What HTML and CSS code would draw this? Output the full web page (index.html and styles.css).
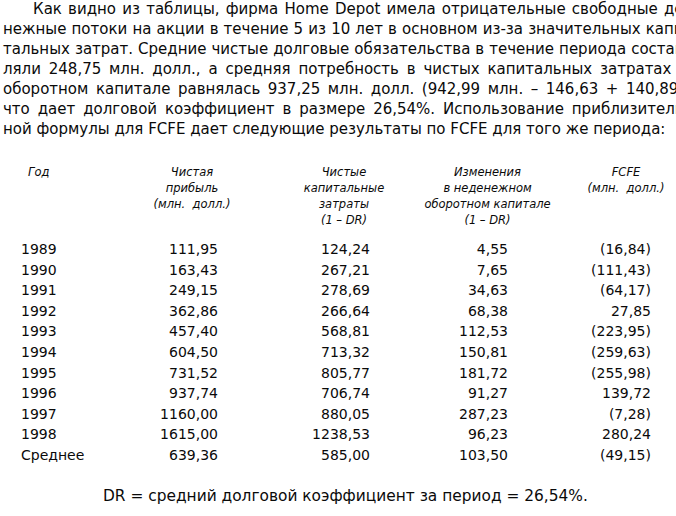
FILE: index.html
```html
<!DOCTYPE html>
<html lang="ru">
<head>
<meta charset="utf-8">
<title>FCFE Home Depot</title>
<link rel="stylesheet" href="styles.css">
</head>
<body>
<div class="page">
  <div class="para">
    <div class="line first">Как видно из таблицы, фирма Home Depot имела отрицательные свободные де-</div>
    <div class="line">нежные потоки на акции в течение 5 из 10 лет в основном из-за значительных капи-</div>
    <div class="line">тальных затрат. Средние чистые долговые обязательства в течение периода состав-</div>
    <div class="line">ляли 248,75 млн. долл., а средняя потребность в чистых капитальных затратах и</div>
    <div class="line">оборотном капитале равнялась 937,25 млн. долл. (942,99 млн. – 146,63 + 140,89),</div>
    <div class="line">что дает долговой коэффициент в размере 26,54%. Использование приблизитель-</div>
    <div class="line last">ной формулы для FCFE дает следующие результаты по FCFE для того же периода:</div>
  </div>

  <table class="data">
    <colgroup>
      <col class="c0"><col class="c1"><col class="c2"><col class="c3"><col class="c4">
    </colgroup>
    <thead>
      <tr>
        <th class="h-year">Год</th>
        <th>Чистая<br>прибыль<br>(млн.&nbsp; долл.)</th>
        <th>Чистые<br>капитальные<br>затраты<br>(1 – DR)</th>
        <th>Изменения<br>в неденежном<br>оборотном капитале<br>(1 – DR)</th>
        <th>FCFE<br>(млн.&nbsp; долл.)</th>
      </tr>
    </thead>
    <tbody>
      <tr><td>1989</td><td>111,95</td><td>124,24</td><td>4,55</td><td>(16,84)</td></tr>
      <tr><td>1990</td><td>163,43</td><td>267,21</td><td>7,65</td><td>(111,43)</td></tr>
      <tr><td>1991</td><td>249,15</td><td>278,69</td><td>34,63</td><td>(64,17)</td></tr>
      <tr><td>1992</td><td>362,86</td><td>266,64</td><td>68,38</td><td>27,85</td></tr>
      <tr><td>1993</td><td>457,40</td><td>568,81</td><td>112,53</td><td>(223,95)</td></tr>
      <tr><td>1994</td><td>604,50</td><td>713,32</td><td>150,81</td><td>(259,63)</td></tr>
      <tr><td>1995</td><td>731,52</td><td>805,77</td><td>181,72</td><td>(255,98)</td></tr>
      <tr><td>1996</td><td>937,74</td><td>706,74</td><td>91,27</td><td>139,72</td></tr>
      <tr><td>1997</td><td>1160,00</td><td>880,05</td><td>287,23</td><td>(7,28)</td></tr>
      <tr><td>1998</td><td>1615,00</td><td>1238,53</td><td>96,23</td><td>280,24</td></tr>
      <tr><td>Среднее</td><td>639,36</td><td>585,00</td><td>103,50</td><td>(49,15)</td></tr>
    </tbody>
  </table>

  <p class="note">DR = средний долговой коэффициент за период = 26,54%.</p>
</div>
</body>
</html>
```

FILE: styles.css
```css
html, body {
  margin: 0;
  padding: 0;
  background: #fff;
  overflow: hidden;
}

body {
  color: #0a0a0a;
  font-family: "DejaVu Sans", "Open Sans", sans-serif;
  font-size: 15px;
}

.page {
  width: 700px;
}

.para {
  margin: -1px 0 0 3px;
  width: 686px;
}

.line {
  line-height: 20px;
  height: 20px;
  white-space: nowrap;
  text-align: justify;
  text-align-last: justify;
}

.line.first {
  text-indent: 30px;
}

.line.last {
  text-align-last: left;
}

.data {
  border-collapse: collapse;
  table-layout: fixed;
  margin: 25px 0 0 21px;
  width: 674px;
}

.c0 { width: 93px; }
.c1 { width: 156px; }
.c2 { width: 148px; }
.c3 { width: 139px; }
.c4 { width: 138px; }

.data th {
  font-style: italic;
  font-weight: normal;
  font-size: 11.5px;
  line-height: 16px;
  text-align: center;
  vertical-align: top;
  padding: 0 0 11px 0;
}

.data th.h-year {
  text-align: left;
  padding-left: 7px;
}

.data td {
  font-size: 14px;
  line-height: 20.6px;
  height: 20.6px;
  padding: 0;
  text-align: right;
  white-space: nowrap;
}

.data td:first-child { text-align: left; }
.data td:nth-child(2) { padding-right: 52px; }
.data td:nth-child(3) { padding-right: 48px; }
.data td:nth-child(4) { padding-right: 49px; }
.data td:nth-child(5) { padding-right: 44px; }

.note {
  margin: 20px 0 0 0;
  padding-left: 103px;
  font-size: 15.4px;
  line-height: 20px;
  white-space: nowrap;
}
```
